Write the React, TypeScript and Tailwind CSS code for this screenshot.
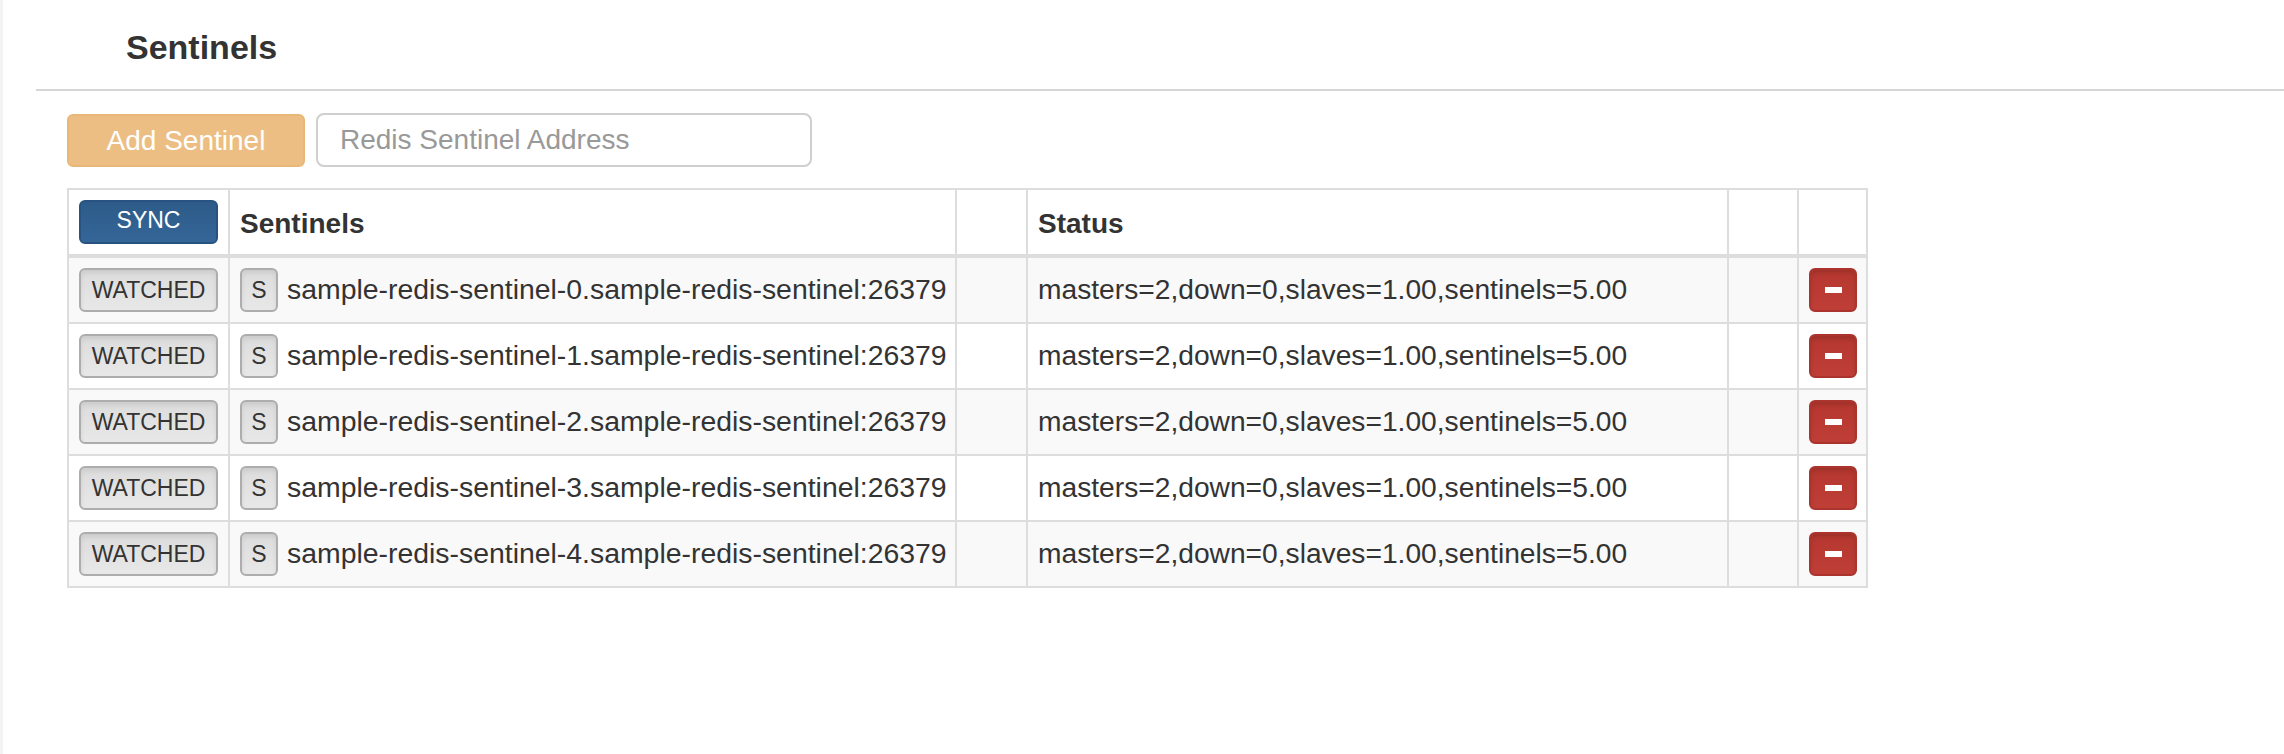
const sentinels = [0, 1, 2, 3, 4].map((i) => ({
  address: `sample-redis-sentinel-${i}.sample-redis-sentinel:26379`,
  status: "masters=2,down=0,slaves=1.00,sentinels=5.00",
}));

const cols = "grid grid-cols-[161px_727px_71px_701px_70px_69px]";
const cell = "border-r-2 border-[#ddd] p-[10px]";

function GrayButton({ label, className }: { label: string; className: string }) {
  return (
    <button
      className={`h-[44px] shrink-0 rounded-[6px] border-2 border-[#adadad] bg-linear-to-b from-[#dcdcdc] to-[#e8e8e8] text-[23px] leading-[36px] text-[#333] shadow-[inset_0_3px_5px_rgba(0,0,0,0.08)] ${className}`}
    >
      {label}
    </button>
  );
}

function MinusButton() {
  return (
    <button className="flex h-[44px] w-[48px] items-center justify-center rounded-[6px] border-2 border-[#ab352e] bg-linear-to-b from-[#b5372f] to-[#bf3f37] shadow-[inset_0_3px_4px_rgba(0,0,0,0.12)]">
      <span className="block h-[6px] w-[17px] bg-white" />
    </button>
  );
}

export default function App() {
  return (
    <div className="min-h-screen border-l-[3px] border-[#f3f3f3] bg-white font-['Liberation_Sans',Arial,sans-serif] text-[#333]">
      <div className="ml-[33px] border-b-2 border-[#d6d6d6] pt-[30px] pb-[25px] pl-[90px]">
        <h3 className="text-[34px] leading-[34px] font-bold">Sentinels</h3>
      </div>

      <div className="mt-[22px] flex items-end gap-[11px] pl-[64px]">
        <button className="h-[53px] w-[238px] rounded-[6px] border-2 border-[#e9b878] bg-[#edbe83] text-[28px] leading-[40px] text-white">
          Add Sentinel
        </button>
        <input
          className="h-[54px] w-[496px] rounded-[8px] border-2 border-[#cfcfcf] px-[22px] text-[28px] text-[#555] outline-none placeholder:text-[#999]"
          placeholder="Redis Sentinel Address"
        />
      </div>

      <div className="mt-[21px] ml-[64px] w-[1801px] border-t-2 border-l-2 border-[#ddd]">
        <div className={`${cols} border-b-4 border-[#ddd] bg-white`}>
          <div className={cell}>
            <button className="h-[44px] w-[139px] rounded-[6px] border-2 border-[#285380] bg-linear-to-b from-[#2d5b89] to-[#356698] pb-[4px] text-[23px] leading-[36px] text-white">
              SYNC
            </button>
          </div>
          <div className={`${cell} flex h-[64px] items-end`}>
            <span className="text-[28px] leading-[40px] font-bold">Sentinels</span>
          </div>
          <div className={cell} />
          <div className={`${cell} flex h-[64px] items-end`}>
            <span className="text-[28px] leading-[40px] font-bold">Status</span>
          </div>
          <div className={cell} />
          <div className={cell} />
        </div>

        {sentinels.map((s, i) => (
          <div
            key={s.address}
            className={`${cols} border-b-2 border-[#ddd] ${i % 2 === 0 ? "bg-[#f9f9f9]" : "bg-white"}`}
          >
            <div className={cell}>
              <GrayButton label="WATCHED" className="w-[139px]" />
            </div>
            <div className={`${cell} flex items-start`}>
              <GrayButton label="S" className="w-[38px]" />
              <span className="ml-[9px] pt-[1px] text-[28.4px] leading-[40px] whitespace-nowrap">{s.address}</span>
            </div>
            <div className={cell} />
            <div className={cell}>
              <span className="block pt-[1px] text-[28.2px] leading-[40px] whitespace-nowrap">{s.status}</span>
            </div>
            <div className={cell} />
            <div className={cell}>
              <MinusButton />
            </div>
          </div>
        ))}
      </div>
    </div>
  );
}
